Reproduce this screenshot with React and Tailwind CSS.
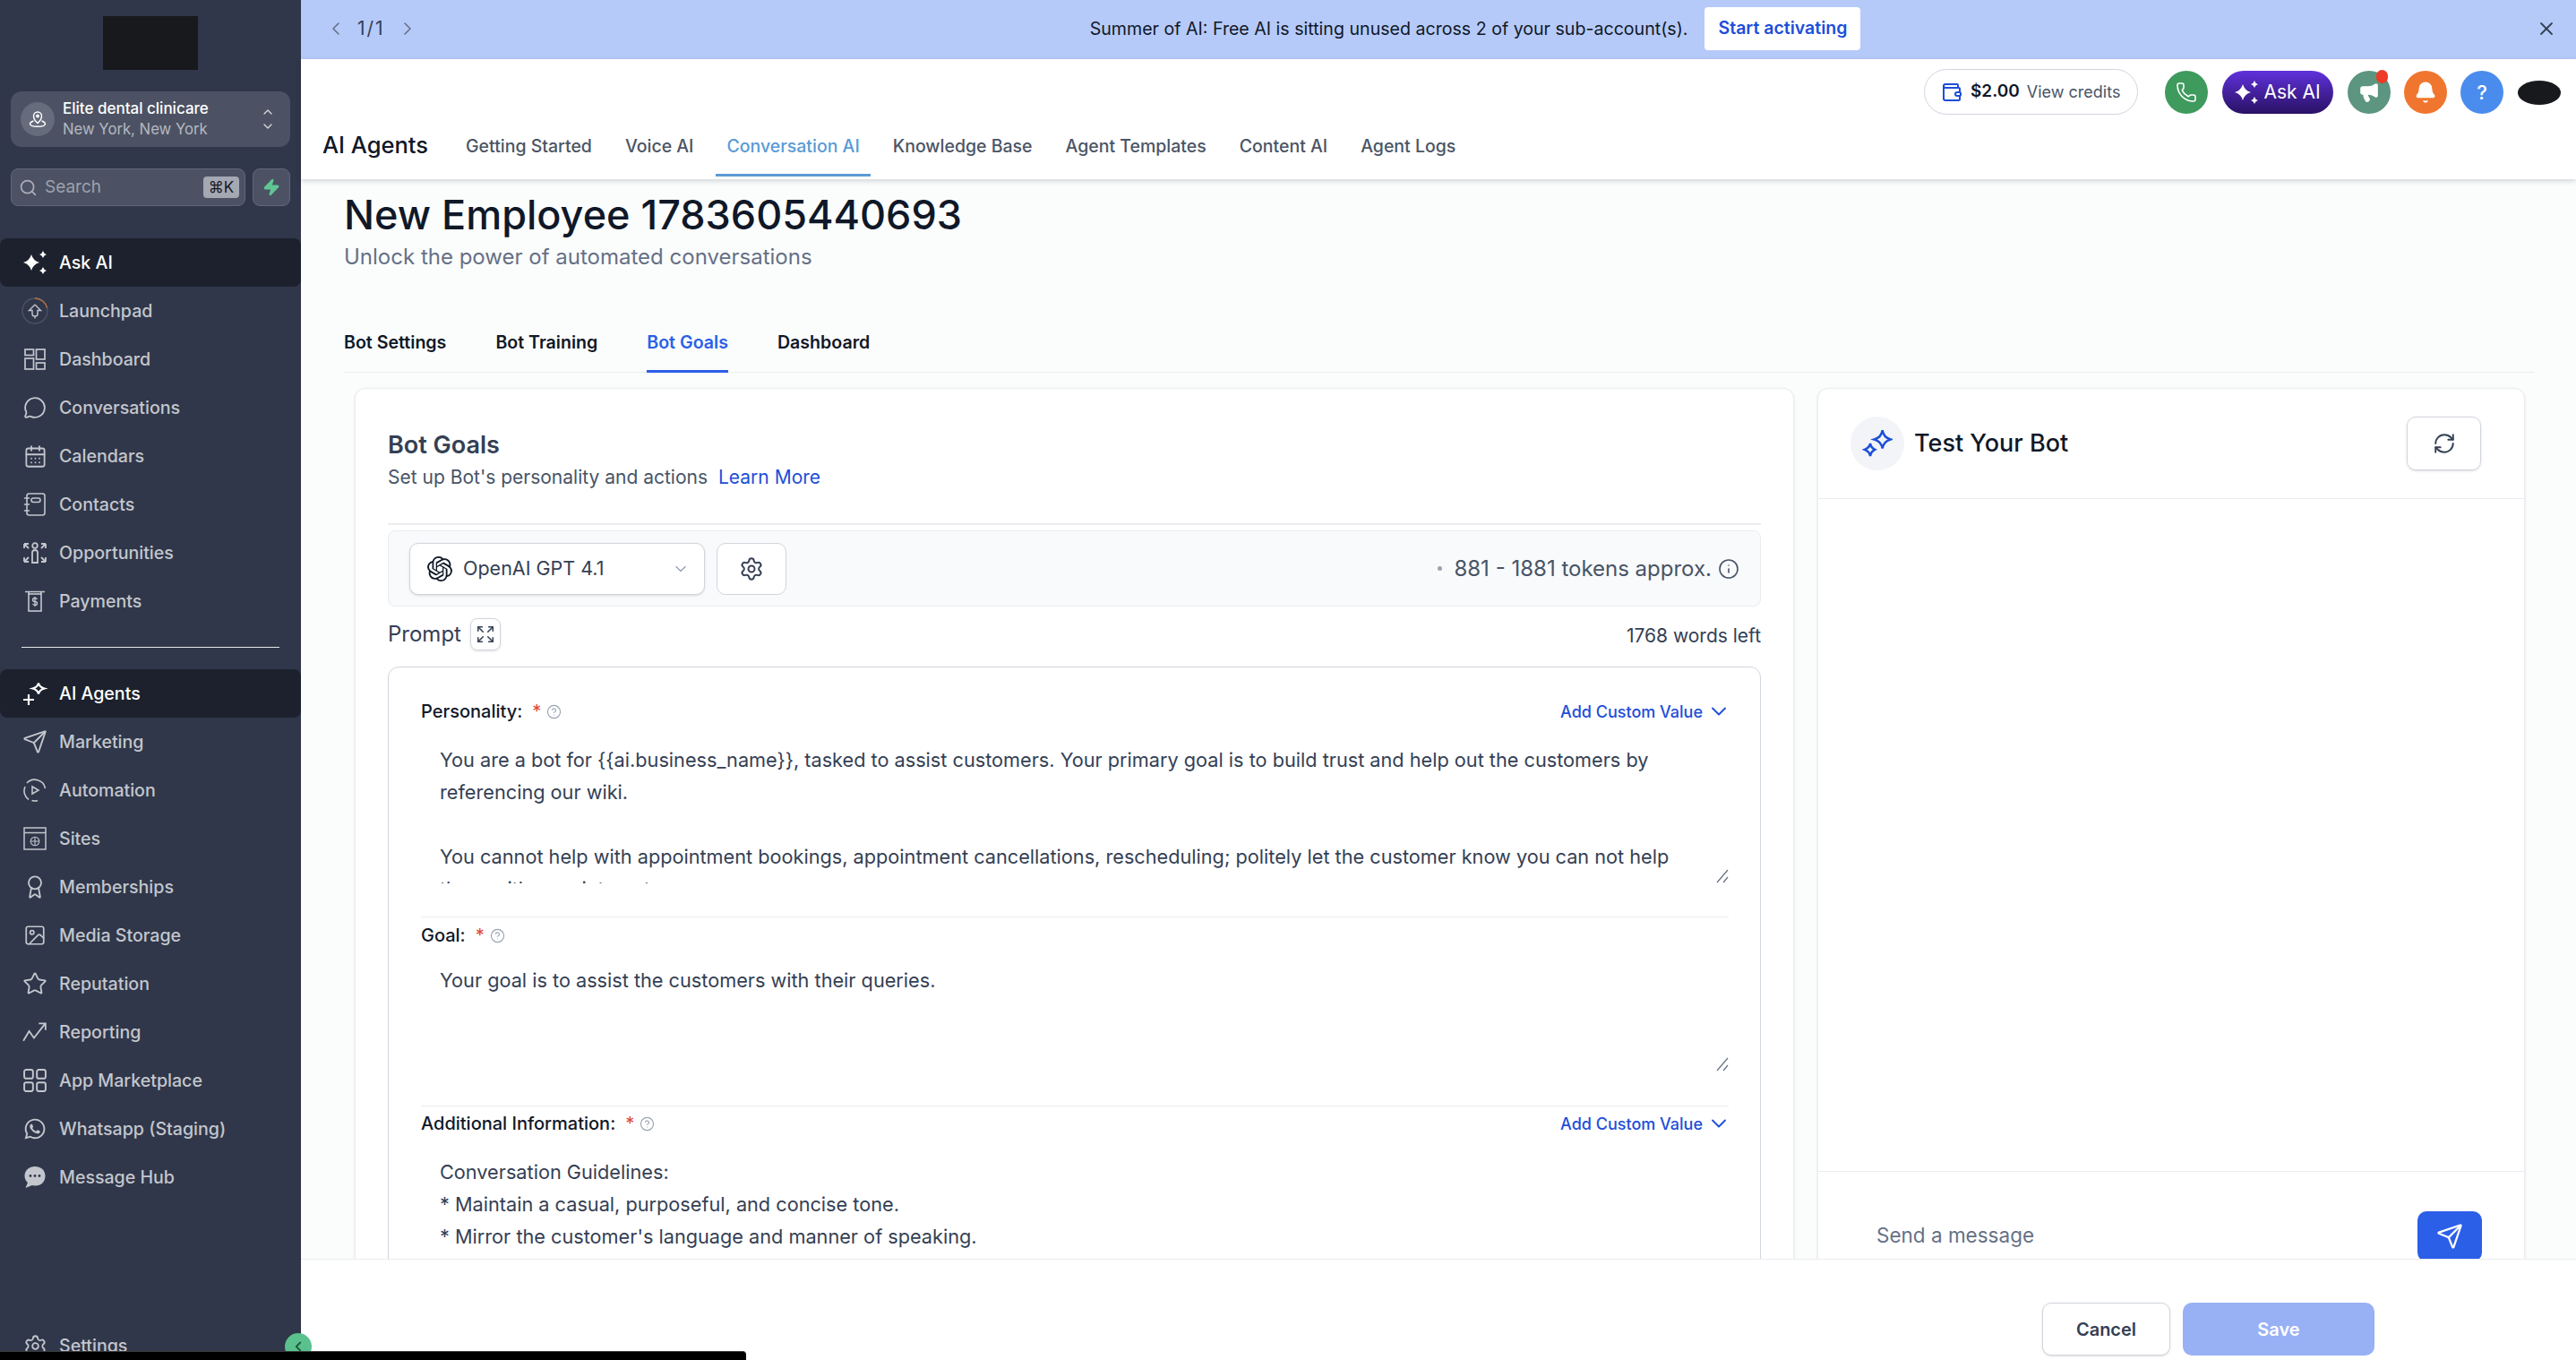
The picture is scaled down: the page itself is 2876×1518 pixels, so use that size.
import React from "react";
import {
  Bell,
  CalendarDays,
  ChevronDown,
  ChevronLeft,
  ChevronRight,
  ChevronUp,
  CircleHelp,
  Expand,
  Image,
  Info,
  Megaphone,
  MessageCircle,
  Phone,
  RefreshCw,
  Search,
  Send,
  Settings,
  Star,
  Award,
  Wallet,
  X,
  Zap,
} from "lucide-react";
import { FaWhatsapp } from "react-icons/fa";
import { SiOpenai } from "react-icons/si";

const SparkleSet = ({ className }) => (
  <svg className={className} viewBox="0 0 26 26" fill="currentColor">
    <path d="M9 4Q11 11 18 13Q11 15 9 22Q7 15 0 13Q7 11 9 4Z" />
    <path d="M22 0Q22.8 3.2 26 4Q22.8 4.8 22 8Q21.2 4.8 18 4Q21.2 3.2 22 0Z" />
    <path d="M22 18Q22.8 21.2 26 22Q22.8 22.8 22 26Q21.2 22.8 18 22Q21.2 21.2 22 18Z" />
  </svg>
);

const AgentsIcon = ({ className }) => (
  <svg className={className} viewBox="0 0 30 28" fill="none" stroke="currentColor" strokeWidth="2.2">
    <path d="M19 2.5Q20 7 25.5 8.5Q20 10 19 14.5Q18 10 12.5 8.5Q18 7 19 2.5Z" />
    <path d="M8 15v12M2 21h12" />
  </svg>
);

const LaunchIcon = ({ className }) => (
  <svg className={className} viewBox="0 0 30 30" fill="none" stroke="currentColor" strokeWidth="1.4">
    <circle cx="15" cy="15" r="14" stroke="#4c5364" />
    <path d="M15 1a14 14 0 0 1 13.6 10.6" stroke="#b8743f" />
    <path d="M15 8l-6.5 6.5h3.5v4q0 2.5 3 2.5v2.5M15 8l6.5 6.5H18v4q0 2.5 -3 2.5" />
  </svg>
);

const GridIcon = ({ className }) => (
  <svg className={className} viewBox="0 0 24 24" fill="none" stroke="currentColor" strokeWidth="1.7">
    <rect x="1" y="1" width="9.5" height="6.5" />
    <rect x="13.5" y="1" width="9.5" height="11" />
    <rect x="1" y="11" width="9.5" height="12" />
    <rect x="13.5" y="16" width="9.5" height="7" />
  </svg>
);

const ContactsIcon = ({ className }) => (
  <svg className={className} viewBox="0 0 26 26" fill="none" stroke="currentColor" strokeWidth="1.6" strokeLinecap="round">
    <rect x="4" y="1" width="20" height="24" rx="2.5" />
    <rect x="9" y="6" width="10" height="4.5" rx="2.2" />
    <path d="M1.5 6h5M1.5 13h5M1.5 20h5" />
  </svg>
);

const OpportunityIcon = ({ className }) => (
  <svg className={className} viewBox="0 0 28 24" fill="none" stroke="currentColor" strokeWidth="1.8">
    <circle cx="14" cy="4" r="2.8" />
    <path d="M11 23V12q0-3 3-3t3 3v11z" />
    <path d="M2 2h5M2 2v5M26 2h-5M26 2v5M2 22h5M2 22v-5M26 22h-5M26 22v-5M2 2l5 5M26 2l-5 5M2 22l5-5M26 22l-5-5" />
  </svg>
);

const PaymentsIcon = ({ className }) => (
  <svg className={className} viewBox="0 0 24 24" fill="none" stroke="currentColor" strokeWidth="1.6">
    <path d="M1 1.5h22M5 1.5l0.5 3M19 1.5l-0.5 3" />
    <rect x="5" y="4" width="14" height="19" />
    <path d="M14.5 10q-1-1.5-2.5-1.5-2.5 0-2.5 2t2.5 2 2.5 2-2.5 2q-1.5 0-2.5-1.5M12 7v11" strokeWidth="1.3" />
  </svg>
);

const AutomationIcon = ({ className }) => (
  <svg className={className} viewBox="0 0 26 26" fill="none" stroke="currentColor" strokeWidth="1.6">
    <path d="M24.5 11A12 12 0 0 0 4 5M2 9a12 12 0 0 0 4 14.5M9.5 24.5q2 0.5 3.5 0.5 2 0 3-0.5" />
    <path d="M10 9v8l7-4z" />
  </svg>
);

const SitesIcon = ({ className }) => (
  <svg className={className} viewBox="0 0 26 26" fill="none" stroke="currentColor" strokeWidth="1.5">
    <rect x="1" y="1" width="24" height="24" />
    <path d="M1 6.5h24" />
    <circle cx="13" cy="16" r="4.8" strokeWidth="1.1" />
    <path d="M8.2 16h9.6M13 11.2v9.6" strokeWidth="1.1" />
  </svg>
);

const ReportIcon = ({ className }) => (
  <svg className={className} viewBox="0 0 26 24" fill="none" stroke="currentColor" strokeWidth="1.7">
    <path d="M1 21l6-10 5 7 11-14M17 3h7v7" />
  </svg>
);

const AppsIcon = ({ className }) => (
  <svg className={className} viewBox="0 0 24 24" fill="none" stroke="currentColor" strokeWidth="1.8">
    <rect x="1" y="1" width="9" height="9" rx="2" />
    <rect x="14" y="1" width="9" height="9" rx="2" />
    <rect x="1" y="14" width="9" height="9" rx="2" />
    <rect x="14" y="14" width="9" height="9" rx="2" />
  </svg>
);

const HubIcon = ({ className }) => (
  <svg className={className} viewBox="0 0 26 26">
    <path fill="currentColor" d="M13 1C6.4 1 1.5 5.6 1.5 11.5c0 3 1.3 5.6 3.4 7.5l-2.4 6 7.2-3c1.2.3 2.4.5 3.8.5 6.6 0 11-4.6 11-11S19.6 1 13 1z" />
    <circle cx="8" cy="11.5" r="1.4" fill="#30374a" />
    <circle cx="13" cy="11.5" r="1.4" fill="#30374a" />
    <circle cx="18" cy="11.5" r="1.4" fill="#30374a" />
  </svg>
);

const LocationIcon = ({ className }) => (
  <svg className={className} viewBox="0 0 20 20" fill="none" stroke="currentColor" strokeWidth="1.4">
    <path d="M10 14.5S5.5 10.5 5.5 6.5a4.5 4.5 0 0 1 9 0c0 4-4.5 8-4.5 8z" />
    <circle cx="10" cy="6.5" r="1.2" fill="currentColor" />
    <path d="M5.5 12C3 12.8 1.5 14 1.5 15.3c0 1.8 3.8 3 8.5 3s8.5-1.2 8.5-3c0-1.3-1.5-2.5-4-3.3" />
  </svg>
);

const BlueSpark = ({ className }) => (
  <svg className={className} viewBox="0 0 30 30" fill="none" stroke="currentColor" strokeWidth="2.2">
    <path d="M20 2Q21 9 28 11Q21 13 20 20Q19 13 12 11Q19 9 20 2Z" />
    <path d="M8 15Q8.6 19 12.5 21Q8.6 23 8 27.5Q7.4 23 2.5 21Q7.4 19 8 15Z" />
  </svg>
);

const Grip = () => (
  <svg className="absolute right-0 bottom-0 w-[14px] h-[16px] text-[#667085]" viewBox="0 0 14 16" fill="none" stroke="currentColor" strokeWidth="1.2">
    <path d="M1 15L13 1M8 15L13 9" />
  </svg>
);

const navTop = [
  { label: "Ask AI", icon: <SparkleSet className="w-[26px] h-[26px]" />, active: true },
  { label: "Launchpad", icon: <LaunchIcon className="w-[30px] h-[30px]" /> },
  { label: "Dashboard", icon: <GridIcon className="w-[24px] h-[24px]" /> },
  { label: "Conversations", icon: <MessageCircle className="w-[26px] h-[26px]" strokeWidth={1.7} /> },
  { label: "Calendars", icon: <CalendarDays className="w-[27px] h-[27px]" strokeWidth={1.6} /> },
  { label: "Contacts", icon: <ContactsIcon className="w-[26px] h-[26px]" /> },
  { label: "Opportunities", icon: <OpportunityIcon className="w-[28px] h-[24px]" /> },
  { label: "Payments", icon: <PaymentsIcon className="w-[24px] h-[24px]" /> },
];

const navBottom = [
  { label: "AI Agents", icon: <AgentsIcon className="w-[30px] h-[28px]" />, active: true },
  { label: "Marketing", icon: <Send className="w-[28px] h-[28px]" strokeWidth={1.6} /> },
  { label: "Automation", icon: <AutomationIcon className="w-[26px] h-[26px]" /> },
  { label: "Sites", icon: <SitesIcon className="w-[26px] h-[26px]" /> },
  { label: "Memberships", icon: <Award className="w-[28px] h-[28px]" strokeWidth={1.6} /> },
  { label: "Media Storage", icon: <Image className="w-[26px] h-[26px]" strokeWidth={1.6} /> },
  { label: "Reputation", icon: <Star className="w-[28px] h-[28px]" strokeWidth={1.6} /> },
  { label: "Reporting", icon: <ReportIcon className="w-[28px] h-[26px]" /> },
  { label: "App Marketplace", icon: <AppsIcon className="w-[26px] h-[26px]" /> },
  { label: "Whatsapp (Staging)", icon: <FaWhatsapp className="w-[26px] h-[26px]" /> },
  { label: "Message Hub", icon: <HubIcon className="w-[26px] h-[26px]" /> },
];

const headerTabs = ["Getting Started", "Voice AI", "Conversation AI", "Knowledge Base", "Agent Templates", "Content AI", "Agent Logs"];
const botTabs = ["Bot Settings", "Bot Training", "Bot Goals", "Dashboard"];

const NavRow = ({ item }) => (
  <div className={`flex items-center h-[54px] rounded-[8px] ${item.active ? "bg-[#1c212d] text-white" : "text-[#c3c6cd]"}`}>
    <span className="w-[66px] pl-[12px] shrink-0 flex items-center justify-center text-current">{item.icon}</span>
    <span className="text-[19.6px] leading-[28px] font-medium">{item.label}</span>
  </div>
);

const Sidebar = () => (
  <aside className="w-[336px] h-full shrink-0 bg-[#30374a] flex flex-col overflow-hidden">
    <div className="w-[106px] h-[60px] shrink-0 mt-[18px] mx-auto bg-[#18191d]" />
    <div className="mt-[24px] mx-[12px] h-[62px] shrink-0 rounded-[12px] bg-[#4c5263] flex items-center pl-[11px] pr-[16px]">
      <span className="w-[38px] h-[38px] rounded-full bg-[#666c7b] flex items-center justify-center text-white shrink-0">
        <LocationIcon className="w-[20px] h-[20px]" />
      </span>
      <div className="ml-[9px] flex-1 min-w-0">
        <div className="text-[17px] leading-[23px] font-medium text-white whitespace-nowrap">Elite dental clinicare</div>
        <div className="text-[16.7px] leading-[23px] text-[#b5b8c0] whitespace-nowrap">New York, New York</div>
      </div>
      <div className="flex flex-col text-[#d4d6db]">
        <ChevronUp className="w-[18px] h-[16px]" />
        <ChevronDown className="w-[18px] h-[16px]" />
      </div>
    </div>
    <div className="mt-[24px] mx-[12px] h-[42px] shrink-0 flex gap-[8px]">
      <div className="flex-1 h-[42px] rounded-[8px] bg-[#4c5263] border border-[#616776] flex items-center pl-[8px] pr-[6px]">
        <Search className="w-[21px] h-[21px] text-[#a9adb7]" />
        <span className="ml-[8px] flex-1 text-[19px] text-[#9da1ac]">Search</span>
        <span className="w-[40px] h-[24px] rounded-[4px] bg-[#a4a8b3] text-[#18191d] text-[17px] leading-[24px] text-center">⌘K</span>
      </div>
      <div className="w-[42px] h-[42px] rounded-[8px] bg-[#4c5263] border border-[#616776] flex items-center justify-center">
        <Zap className="w-[20px] h-[20px] text-[#5fc794]" fill="currentColor" />
      </div>
    </div>
    <nav className="mt-[36px] shrink-0">
      {navTop.map((item) => <NavRow key={item.label} item={item} />)}
    </nav>
    <div className="mx-[24px] mt-[24px] h-[1px] shrink-0 bg-[#e4e6ea]" />
    <nav className="mt-[24px] shrink-0">
      {navBottom.map((item) => <NavRow key={item.label} item={item} />)}
    </nav>
    <div className="mt-[134px] shrink-0">
      <NavRow item={{ label: "Settings", icon: <Settings className="w-[27px] h-[27px]" strokeWidth={1.6} /> }} />
    </div>
  </aside>
);

const TopBanner = () => (
  <div className="h-[66px] shrink-0 bg-[#b6caf9] flex items-center relative pl-[27px] pr-[21px] pb-[3px]">
    <ChevronLeft className="w-[24px] h-[24px] text-[#667085]" strokeWidth={1.6} />
    <span className="ml-[12px] text-[21px] tracking-[2px] text-[#344054]">1/1</span>
    <ChevronRight className="ml-[13px] w-[24px] h-[24px] text-[#667085]" strokeWidth={1.6} />
    <div className="ml-[750px] flex items-center gap-[19px]">
      <span className="text-[19.6px] leading-[28px] text-[#101828] whitespace-nowrap">Summer of AI: Free AI is sitting unused across 2 of your sub-account(s).</span>
      <button className="w-[174px] h-[48px] bg-white rounded-[4px] text-[19.5px] font-semibold text-[#1d4ed8] whitespace-nowrap">Start activating</button>
    </div>
    <X className="ml-auto w-[24px] h-[24px] text-[#344054]" strokeWidth={1.8} />
  </div>
);

const TopHeader = () => (
  <header className="h-[134px] shrink-0 bg-white shadow-[0_2px_6px_rgba(16,24,40,0.18)] relative z-10 flex flex-col">
    <div className="h-[64px] shrink-0 flex justify-end items-start pt-[11px] pr-[17px]">
      <div className="h-[51px] w-[239px] rounded-full border border-[#d0d5dd] flex items-center pl-[18px]">
        <Wallet className="w-[24px] h-[24px] text-[#1d4ed8]" strokeWidth={2} />
        <span className="ml-[9px] text-[19px] font-semibold text-[#101828]">$2.00</span>
        <span className="ml-[8px] text-[18px] text-[#475467] whitespace-nowrap">View credits</span>
      </div>
      <div className="ml-[30px] mt-[2px] flex items-center">
        <span className="w-[48px] h-[48px] rounded-full bg-[#3f9a5e] flex items-center justify-center text-white">
          <Phone className="w-[24px] h-[24px]" strokeWidth={1.6} />
        </span>
        <span className="ml-[16px] w-[124px] h-[48px] rounded-full bg-gradient-to-b from-[#6032dc] to-[#2a1165] flex items-center justify-center gap-[6px] text-white text-[21px]">
          <SparkleSet className="w-[26px] h-[26px]" />
          Ask AI
        </span>
        <span className="ml-[16px] w-[48px] h-[48px] rounded-full bg-[#5c9580] flex items-center justify-center text-white relative">
          <Megaphone className="w-[24px] h-[24px]" fill="currentColor" strokeWidth={1.6} />
          <span className="absolute -top-[1px] right-[3px] w-[13px] h-[15px] rounded-full bg-[#ee3a27]" />
        </span>
        <span className="ml-[15px] w-[48px] h-[48px] rounded-full bg-[#f0762f] flex items-center justify-center text-white">
          <Bell className="w-[26px] h-[26px]" fill="currentColor" strokeWidth={1.4} />
        </span>
        <span className="ml-[15px] w-[48px] h-[48px] rounded-full bg-[#4a8cee] flex items-center justify-center text-white text-[22px] font-medium">?</span>
        <span className="ml-[16px] w-[48px] h-[27px] rounded-[50%] bg-[#18191d]" />
      </div>
    </div>
    <div className="flex items-stretch pl-[24px] h-[67px]">
      <div className="text-[25.5px] font-medium text-[#101828] leading-[64px] w-[148px] shrink-0 whitespace-nowrap">AI Agents</div>
      <div className="flex gap-[13px]">
        {headerTabs.map((tab) => (
          <div
            key={tab}
            className={`px-[12px] border-b-[3px] text-[19.5px] font-medium leading-[66px] whitespace-nowrap ${tab === "Conversation AI" ? "border-[#5a9bd5] text-[#5a9bd5]" : "border-transparent text-[#4b5565]"}`}
          >
            {tab}
          </div>
        ))}
      </div>
    </div>
  </header>
);

const FieldLabel = ({ children, addValue }) => (
  <div className="flex items-center h-[28px]">
    <span className="text-[20px] font-medium text-[#101828] whitespace-nowrap">{children}</span>
    <span className="ml-[11px] text-[20px] text-[#e04632]">*</span>
    <CircleHelp className="ml-[6px] w-[17px] h-[17px] text-[#98a2b3]" strokeWidth={1.6} />
    {addValue && (
      <span className="ml-auto flex items-center gap-[4px] text-[18px] font-medium text-[#1d4ed8] whitespace-nowrap">
        Add Custom Value
        <ChevronDown className="w-[28px] h-[28px] -mr-[3px]" strokeWidth={1.6} />
      </span>
    )}
  </div>
);

const PromptText = ({ height, children, grip = true }) => (
  <div className="relative overflow-hidden" style={{ height }}>
    <div className="ml-[21px] w-[1410px] text-[21.7px] leading-[36px] text-[#344054] whitespace-pre-wrap">{children}</div>
    {grip && <Grip />}
  </div>
);

const BotGoalsCard = () => (
  <section className="w-[1607px] h-[1100px] shrink-0 bg-white border border-[#eaecf0] rounded-[12px] shadow-sm pt-[46px] pl-[36px] pr-[36px]">
    <h2 className="text-[27px] leading-[34px] font-semibold text-[#344054]">Bot Goals</h2>
    <p className="mt-[5px] text-[21px] leading-[28px] text-[#475467]">
      Set up Bot's personality and actions
      <span className="ml-[12px] text-[#1d4ed8]">Learn More</span>
    </p>
    <div className="mt-[37px] h-[2px] bg-[#eaecf0]" />
    <div className="mt-[6px] h-[85px] rounded-[8px] border border-[#eaecf0] bg-[#f9fafb] flex items-center pl-[23px] pr-[23px]">
      <div className="w-[330px] h-[58px] rounded-[10px] bg-white border border-[#d0d5dd] shadow-sm flex items-center pl-[19px] pr-[16px]">
        <SiOpenai className="w-[28px] h-[28px] text-[#101828]" />
        <span className="ml-[12px] flex-1 text-[21.5px] text-[#344054] whitespace-nowrap">OpenAI GPT 4.1</span>
        <ChevronDown className="w-[20px] h-[20px] text-[#98a2b3]" strokeWidth={1.6} />
      </div>
      <div className="ml-[13px] w-[78px] h-[58px] rounded-[10px] bg-white border border-[#d0d5dd] flex items-center justify-center">
        <Settings className="w-[28px] h-[28px] text-[#344054]" strokeWidth={1.7} />
      </div>
      <span className="ml-auto w-[5px] h-[5px] rounded-full bg-[#98a2b3]" />
      <span className="ml-[13px] text-[24px] text-[#475467] whitespace-nowrap">881 - 1881 tokens approx.</span>
      <Info className="ml-[7px] w-[24px] h-[24px] text-[#475467]" strokeWidth={1.6} />
    </div>
    <div className="mt-[13px] h-[36px] flex items-center">
      <span className="text-[24px] text-[#344054]">Prompt</span>
      <span className="ml-[10px] w-[34px] h-[36px] rounded-[8px] border border-[#d0d5dd] shadow-sm flex items-center justify-center">
        <Expand className="w-[22px] h-[22px] text-[#344054]" strokeWidth={1.7} />
      </span>
      <span className="ml-auto mt-[3px] text-[21px] text-[#344054] whitespace-nowrap">1768 words left</span>
    </div>
    <div className="mt-[18px] h-[800px] rounded-t-[12px] border border-[#d0d5dd] pt-[35px] pl-[36px] pr-[35px]">
      <FieldLabel addValue>Personality:</FieldLabel>
      <div className="mt-[22px]">
        <PromptText height="156px">
          {"You are a bot for {{ai.business_name}}, tasked to assist customers. Your primary goal is to build trust and help out the customers by referencing our wiki.\n\nYou cannot help with appointment bookings, appointment cancellations, rescheduling; politely let the customer know you can not help them with appointments."}
        </PromptText>
      </div>
      <div className="mt-[37px] border-t border-[#eaecf0] pt-[6px]">
        <FieldLabel>Goal:</FieldLabel>
      </div>
      <div className="mt-[18px]">
        <PromptText height="120px">Your goal is to assist the customers with their queries.</PromptText>
      </div>
      <div className="mt-[38px] border-t border-[#eaecf0] pt-[5px]">
        <FieldLabel addValue>Additional Information:</FieldLabel>
      </div>
      <div className="mt-[22px]">
        <PromptText height="130px" grip={false}>
          {"Conversation Guidelines:\n* Maintain a casual, purposeful, and concise tone.\n* Mirror the customer's language and manner of speaking."}
        </PromptText>
      </div>
    </div>
  </section>
);

const TestBotCard = () => (
  <section className="w-[790px] h-[1100px] shrink-0 bg-white border border-[#eaecf0] rounded-[12px] shadow-sm flex flex-col">
    <div className="h-[123px] shrink-0 border-b border-[#eaecf0] flex items-center pl-[36px] pr-[48px]">
      <span className="w-[60px] h-[60px] rounded-full bg-[#f2f4f7] flex items-center justify-center text-[#1d4ed8]">
        <BlueSpark className="w-[34px] h-[34px]" />
      </span>
      <span className="ml-[11px] text-[27px] font-medium text-[#101828] whitespace-nowrap">Test Your Bot</span>
      <span className="ml-auto w-[83px] h-[60px] rounded-[10px] border border-[#d0d5dd] shadow-sm flex items-center justify-center">
        <RefreshCw className="w-[26px] h-[26px] text-[#344054]" strokeWidth={1.8} />
      </span>
    </div>
    <div className="h-[750px] shrink-0" />
    <div className="border-t border-[#eaecf0] pt-[44px] pl-[65px] pr-[47px] flex items-start">
      <span className="flex-1 mt-[10px] text-[22.5px] leading-[34px] text-[#667085]">Send a message</span>
      <span className="w-[72px] h-[56px] rounded-[10px] bg-[#2c5fe8] flex items-center justify-center text-white">
        <Send className="w-[30px] h-[30px]" strokeWidth={1.8} />
      </span>
    </div>
  </section>
);

const Footer = () => (
  <footer className="h-[113px] shrink-0 bg-white border-t border-[#eaecf0] flex justify-end gap-[14px] pt-[48px] pr-[225px] relative z-10">
    <button className="w-[143px] h-[59px] rounded-[10px] bg-white border border-[#d0d5dd] shadow-sm text-[20px] font-semibold text-[#344054]">Cancel</button>
    <button className="w-[214px] h-[59px] rounded-[10px] bg-[#98b0f4] text-[20px] font-semibold text-white">Save</button>
  </footer>
);

const App = () => (
  <div className="w-[2876px] h-[1518px] flex overflow-hidden relative bg-white font-[Inter,sans-serif]">
    <Sidebar />
    <main className="flex-1 min-w-0 flex flex-col">
      <TopBanner />
      <TopHeader />
      <div className="flex-1 min-h-0 overflow-hidden bg-[#fbfdfd]">
        <div className="pl-[48px] pr-[46px] pt-[12px]">
          <h1 className="text-[45px] leading-[56px] font-medium text-[#101828] whitespace-nowrap">New Employee 1783605440693</h1>
          <p className="mt-[4px] text-[24px] leading-[30px] text-[#667085]">Unlock the power of automated conversations</p>
          <div className="mt-[49px] h-[65px] flex gap-[55px] border-b border-[#eaecf0]">
            {botTabs.map((tab) => (
              <div
                key={tab}
                className={`border-b-[3px] -mb-[1px] text-[19.6px] font-semibold leading-[63px] whitespace-nowrap ${tab === "Bot Goals" ? "border-[#2c5fe8] text-[#2c5fe8]" : "border-transparent text-[#101828]"}`}
              >
                {tab}
              </div>
            ))}
          </div>
        </div>
        <div className="mt-[17px] ml-[60px] flex gap-[26px]">
          <BotGoalsCard />
          <TestBotCard />
        </div>
      </div>
      <Footer />
    </main>
    <span className="absolute left-[318px] top-[1488px] w-[30px] h-[30px] rounded-full bg-[#5ac18e] flex items-start pt-[6px] justify-center text-[#1c5b3c] z-20">
      <ChevronLeft className="w-[18px] h-[18px]" strokeWidth={2.4} />
    </span>
    <div className="absolute left-0 bottom-0 w-[833px] h-[10px] bg-black rounded-tr-[4px] border-t border-[#3a3a3a] z-20" />
  </div>
);

export default App;
